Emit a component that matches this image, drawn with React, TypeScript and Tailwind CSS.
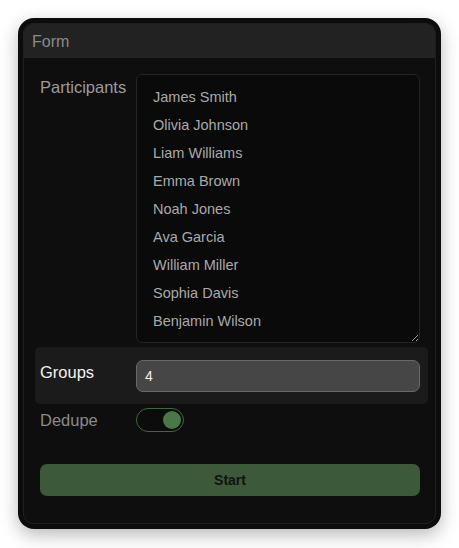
import { useState } from 'react';

const names = [
  'James Smith',
  'Olivia Johnson',
  'Liam Williams',
  'Emma Brown',
  'Noah Jones',
  'Ava Garcia',
  'William Miller',
  'Sophia Davis',
  'Benjamin Wilson',
];

export default function App() {
  const [groups, setGroups] = useState('4');
  const [dedupe, setDedupe] = useState(true);

  return (
    <div className="min-h-screen bg-white p-[18px] font-['Liberation_Sans',Arial,sans-serif]">
      <div className="w-[423px] h-[511px] rounded-[16px] bg-[#0c0c0c] p-[5px] shadow-[0_6px_18px_rgba(0,0,0,0.28)]">
        <div className="h-full rounded-[10px] border border-[#202020] bg-[#0e0e0e] overflow-hidden">
          {/* header */}
          <div className="h-[34px] bg-[#222222] px-[8px] pt-[2px] flex items-center text-[16px] text-[#8a8a8a]">
            Form
          </div>

          <div className="pl-[16px] pr-[15px] pt-[16px]">
            {/* participants */}
            <div className="flex">
              <label className="w-[96px] pt-[3px] text-[16.5px] leading-[20px] text-[#9c9c9c]">
                Participants
              </label>
              <textarea
                readOnly
                defaultValue={names.join('\n')}
                className="flex-1 h-[269px] rounded-[6px] border border-[#252525] bg-[#0a0a0a] px-[16px] py-[8px] text-[14.5px] leading-[28px] text-[#a9a9a9] outline-none resize-y overflow-hidden"
              />
            </div>

            {/* groups */}
            <div className="mt-[4px] -ml-[5px] -mr-[8px] h-[57px] rounded-[5px] bg-[#1b1b1b] pl-[5px] pr-[8px] flex items-center">
              <label className="w-[96px] pb-[6px] text-[16.5px] text-[#f2f2f2]">Groups</label>
              <input
                value={groups}
                onChange={(e) => setGroups(e.target.value)}
                className="flex-1 h-[32px] rounded-[7px] border border-[#6a6a6a] bg-[#464646] px-[8px] text-[14px] text-[#f0f0f0] outline-none"
              />
            </div>

            {/* dedupe */}
            <div className="mt-[4px] flex items-center h-[24px]">
              <label className="w-[96px] text-[16.5px] text-[#8a8a8a]">Dedupe</label>
              <button
                onClick={() => setDedupe(!dedupe)}
                className={`w-[48px] h-[24px] rounded-full border border-[#3c6a3c] bg-[#0c0c0c] flex items-center px-[2px] ${
                  dedupe ? 'justify-end' : 'justify-start'
                }`}
              >
                <span className="block w-[18px] h-[18px] rounded-full bg-[#4a7748]" />
              </button>
            </div>

            {/* start */}
            <button className="mt-[32px] w-full h-[32px] rounded-[7px] bg-[#3c5a39] text-[14px] font-semibold text-[#121212]">
              Start
            </button>
          </div>
        </div>
      </div>
    </div>
  );
}
